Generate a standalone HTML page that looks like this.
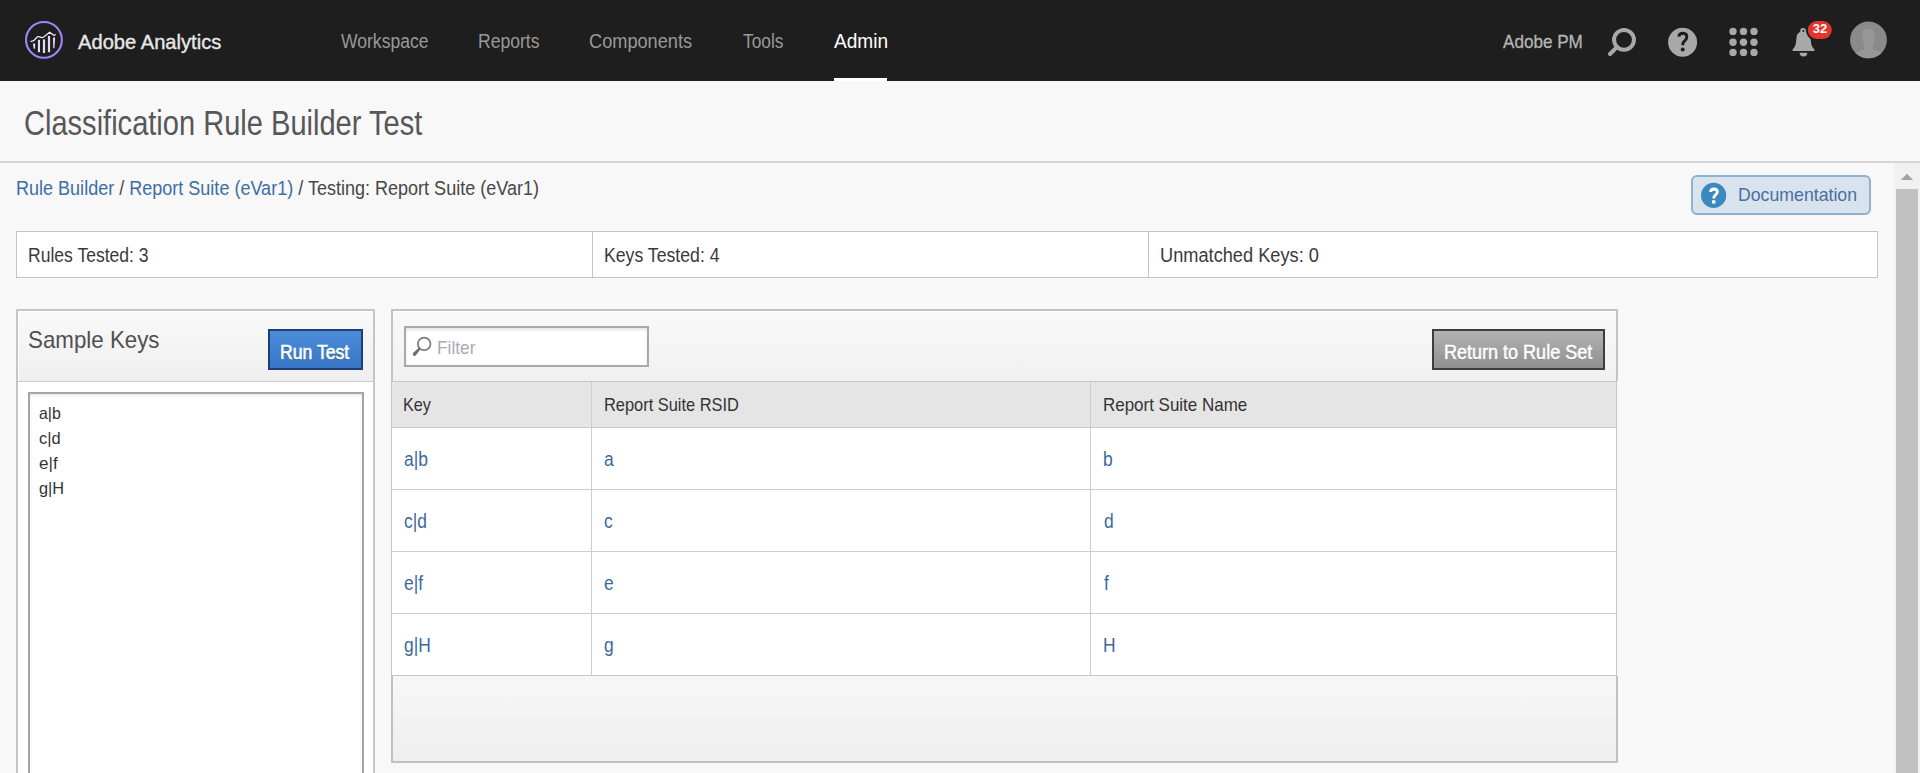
<!DOCTYPE html>
<html><head><meta charset="utf-8">
<style>
*{box-sizing:border-box;margin:0;padding:0}
html,body{width:1920px;height:773px;overflow:hidden;background:#f8f8f8;font-family:"Liberation Sans",sans-serif;position:relative}
.b{position:absolute}
.t{position:absolute;white-space:nowrap;transform-origin:0 0}
</style></head><body>
<!-- header -->
<div class="b" style="left:0;top:0;width:1920px;height:81px;background:#1e1e1e"></div>
<div class="b" style="left:834px;top:78px;width:53px;height:3px;background:#fff"></div>
<svg class="b" style="left:24px;top:20px" width="40" height="40" viewBox="0 0 40 40">
  <circle cx="19.95" cy="19.9" r="17.9" fill="none" stroke="#9c86f0" stroke-width="2.1"/>
  <path d="M6.5 21.4 Q8.5 21.6 10.5 20 Q12.5 17.2 13.9 16.6 Q15.5 16.4 17.1 17.5 Q18.5 17.8 20 16.8 L25.6 12.3 L30 15.3 Q30.8 15.4 31.8 14.4" fill="none" stroke="#ece6ff" stroke-width="1.3"/>
  <g fill="#e2dbf7">
    <path d="M8.9 23.6 L11.1 23.6 L11.1 28.8 L9.7 28.8 Z"/>
    <rect x="13.9" y="19.9" width="2.1" height="12.3"/>
    <rect x="18.9" y="19.4" width="2.2" height="13.6"/>
    <rect x="23.9" y="15.9" width="2.2" height="16.3"/>
    <path d="M29 17.6 L31.1 17.6 L30.4 28.2 L29.2 28.2 Z"/>
  </g>
</svg>
<!-- right header icons -->
<svg class="b" style="left:1600px;top:20px" width="300" height="45" viewBox="1600 20 300 45">
  <!-- search -->
  <circle cx="1624" cy="39.85" r="9.95" fill="none" stroke="#a8a8a8" stroke-width="4"/>
  <line x1="1617" y1="47" x2="1610" y2="54" stroke="#a8a8a8" stroke-width="4" stroke-linecap="round"/>
  <!-- help -->
  <circle cx="1682.6" cy="42.3" r="14.5" fill="#a8a8a8"/>
  <path d="M1678.9 36.6 Q1679.2 33.3 1682.9 33.3 Q1686.8 33.4 1686.8 37 Q1686.6 39.8 1684.3 41.2 Q1682.7 42.3 1682.7 45.3" fill="none" stroke="#1e1e1e" stroke-width="3"/>
  <circle cx="1682.7" cy="49.6" r="2" fill="#1e1e1e"/>
  <!-- grid -->
  <g fill="#a8a8a8">
    <circle cx="1733" cy="31.4" r="3.7"/><circle cx="1743.5" cy="31.4" r="3.7"/><circle cx="1754" cy="31.4" r="3.7"/>
    <circle cx="1733" cy="42.3" r="3.7"/><circle cx="1743.5" cy="42.3" r="3.7"/><circle cx="1754" cy="42.3" r="3.7"/>
    <circle cx="1733" cy="52.4" r="3.7"/><circle cx="1743.5" cy="52.4" r="3.7"/><circle cx="1754" cy="52.4" r="3.7"/>
  </g>
  <!-- bell -->
  <g fill="#a8a8a8">
    <circle cx="1803.1" cy="30.9" r="2.9"/>
    <path d="M1803.5 31.4 C1799.2 31.4 1797 33.5 1796.7 36.5 L1795.8 43.5 C1795.4 46.5 1794 48 1792.6 49.2 L1792.6 50.9 L1814.4 50.9 L1814.4 49.2 C1813 48 1811.6 46.5 1811.2 43.5 L1810.3 36.5 C1810 33.5 1807.8 31.4 1803.5 31.4 Z"/>
    <path d="M1799.7 52.8 L1807.3 52.8 Q1807.3 56.6 1803.5 56.6 Q1799.7 56.6 1799.7 52.8 Z"/>
  </g>
  <circle cx="1803.4" cy="31" r="1" fill="#1e1e1e"/>
  <rect x="1806" y="19" width="27.6" height="22" rx="11" fill="#1e1e1e"/>
  <rect x="1807.8" y="21" width="24" height="18" rx="9" fill="#e4352d"/>
  <text x="1820" y="33" text-anchor="middle" font-family="Liberation Sans" font-weight="bold" font-size="13" fill="#fff">32</text>
  <!-- avatar -->
  <defs><clipPath id="av"><circle cx="1868.5" cy="39.9" r="18.4"/></clipPath></defs>
  <circle cx="1868.5" cy="39.9" r="18.4" fill="#8a8a8a"/>
  <g clip-path="url(#av)" fill="#979797">
    <path d="M1862.3 33.5 Q1862.3 28.8 1868.4 28.8 Q1874.5 28.8 1874.5 33.5 L1874.3 39 Q1874 43 1872.8 45 L1873 49.5 Q1880 51 1884 54.5 L1884 62 L1853 62 L1853 54.5 Q1857 51 1864 49.5 L1864.2 45 Q1862.9 43 1862.6 39 Z"/>
  </g>
</svg>
<!-- rule + scrollbar -->
<div class="b" style="left:0;top:161px;width:1920px;height:2px;background:#d5d5d5"></div>
<div class="b" style="left:1894px;top:163px;width:26px;height:610px;background:#f1f1f1"></div>
<svg class="b" style="left:1894px;top:163px" width="26" height="30" viewBox="0 0 26 30"><path d="M6.8 17 L13 10.8 L19.2 17 Z" fill="#a3a3a3"/></svg>
<div class="b" style="left:1896px;top:189px;width:22px;height:584px;background:#c1c1c1"></div>
<!-- documentation button -->
<div class="b" style="left:1691px;top:175px;width:180px;height:40px;background:#d9e3ed;border:2px solid #8eb0d1;border-radius:6px"></div>
<svg class="b" style="left:1700px;top:182px" width="28" height="28" viewBox="0 0 28 28">
  <circle cx="13.6" cy="13.4" r="12.6" fill="#3a8ac0"/>
  <path d="M10.6 10 Q10.8 7 14 7 Q17.3 7.1 17.3 10 Q17.2 12 15.2 13.2 Q13.8 14 13.8 16.6" fill="none" stroke="#fff" stroke-width="2.9"/>
  <rect x="12" y="18.3" width="3.4" height="3.2" fill="#fff"/>
</svg>
<!-- stats -->
<div class="b" style="left:16px;top:231px;width:1862px;height:47px;background:#fff;border:1px solid #c4c4c4"></div>
<div class="b" style="left:592px;top:232px;width:1px;height:45px;background:#c4c4c4"></div>
<div class="b" style="left:1148px;top:232px;width:1px;height:45px;background:#c4c4c4"></div>
<!-- sample keys panel -->
<div class="b" style="left:16px;top:309px;width:359px;height:480px;background:#fff;border:2px solid #c6c6c6"></div>
<div class="b" style="left:18px;top:311px;width:355px;height:70px;background:linear-gradient(#f9f9f9,#efefef);border-top:1px solid #fff;border-left:1px solid #fff"></div>
<div class="b" style="left:18px;top:381px;width:355px;height:1px;background:#cbcbcb"></div>
<div class="b" style="left:268px;top:329px;width:95px;height:41px;background:linear-gradient(#4b8cd9,#3876c7);border:2px solid #1b3e74"></div>
<div class="b" style="left:28px;top:392px;width:336px;height:400px;background:#fff;border:2px solid #a6a6a6;box-shadow:inset 0 2px 3px rgba(0,0,0,.08)"></div>
<!-- table panel -->
<div class="b" style="left:391px;top:309px;width:1227px;height:72px;background:linear-gradient(#f9f9f9,#f0f0f0);border:2px solid #c3c3c3;border-bottom:none"></div>
<div class="b" style="left:393px;top:311px;width:1223px;height:1px;background:#fff"></div>
<div class="b" style="left:404px;top:326px;width:245px;height:41px;background:#fff;border:2px solid #a9a9a9;box-shadow:inset 0 2px 3px rgba(0,0,0,.10)"></div>
<svg class="b" style="left:410px;top:334px" width="26" height="26" viewBox="410 334 26 26">
  <circle cx="424.2" cy="343.9" r="6.3" fill="none" stroke="#7c7c7c" stroke-width="1.7"/>
  <path d="M419.2 347.6 L420.6 349 L415.8 355.4 Q414 356.4 413 355.2 Q412.4 353.8 413.6 352.6 Z" fill="#6e6e6e"/>
</svg>
<div class="b" style="left:1432px;top:329px;width:173px;height:41px;background:linear-gradient(#b3b3b3,#8f8f8f);border:2px solid #3d3d3d"></div>
<!-- table -->
<div class="b" style="left:391px;top:381px;width:1226px;height:295px;background:#fff;border-left:1px solid #c6c6c6;border-right:1px solid #c6c6c6"></div>
<div class="b" style="left:392px;top:382px;width:1224px;height:45px;background:#e5e5e5"></div>
<div class="b" style="left:391px;top:381px;width:1226px;height:1px;background:#c6c6c6"></div>
<div class="b" style="left:391px;top:427px;width:1226px;height:1px;background:#c8c8c8"></div>
<div class="b" style="left:391px;top:489px;width:1226px;height:1px;background:#cdcdcd"></div>
<div class="b" style="left:391px;top:551px;width:1226px;height:1px;background:#cdcdcd"></div>
<div class="b" style="left:391px;top:613px;width:1226px;height:1px;background:#cdcdcd"></div>
<div class="b" style="left:391px;top:675px;width:1226px;height:1px;background:#c6c6c6"></div>
<div class="b" style="left:591px;top:382px;width:1px;height:293px;background:#cdcdcd"></div>
<div class="b" style="left:1090px;top:382px;width:1px;height:293px;background:#cdcdcd"></div>
<!-- footer -->
<div class="b" style="left:391px;top:676px;width:1227px;height:87px;background:linear-gradient(#f7f7f7,#eeeeee);border:2px solid #c0c0c0;border-top:none"></div>
<div class="t" style="left:78.40px;top:31.02px;font-size:21px;line-height:21px;font-weight:normal;color:#e8e8e8;transform:scaleX(0.9588);-webkit-text-stroke:0.35px #e8e8e8;">Adobe Analytics</div>
<div class="t" style="left:341.40px;top:30.87px;font-size:20px;line-height:20px;font-weight:normal;color:#999999;transform:scaleX(0.8780);">Workspace</div>
<div class="t" style="left:478.12px;top:30.87px;font-size:20px;line-height:20px;font-weight:normal;color:#999999;transform:scaleX(0.8779);">Reports</div>
<div class="t" style="left:589.39px;top:30.87px;font-size:20px;line-height:20px;font-weight:normal;color:#999999;transform:scaleX(0.9093);">Components</div>
<div class="t" style="left:742.50px;top:30.87px;font-size:20px;line-height:20px;font-weight:normal;color:#999999;transform:scaleX(0.8674);">Tools</div>
<div class="t" style="left:833.50px;top:30.87px;font-size:20px;line-height:20px;font-weight:normal;color:#ffffff;transform:scaleX(0.9538);">Admin</div>
<div class="t" style="left:1503.20px;top:31.72px;font-size:19px;line-height:19px;font-weight:normal;color:#b5b5b5;transform:scaleX(0.9000);-webkit-text-stroke:0.3px #b5b5b5;">Adobe PM</div>
<div class="t" style="left:23.97px;top:104.97px;font-size:35px;line-height:35px;font-weight:normal;color:#575757;transform:scaleX(0.8300);">Classification Rule Builder Test</div>
<div class="t" style="left:16.32px;top:179.16px;font-size:19.3px;line-height:19.3px;font-weight:normal;color:#474747;transform:scaleX(0.9348);"><span style="color:#3b6ea5">Rule Builder</span> / <span style="color:#3b6ea5">Report Suite (eVar1)</span> / Testing: Report Suite (eVar1)</div>
<div class="t" style="left:1737.80px;top:186.72px;font-size:17.7px;line-height:17.7px;font-weight:normal;color:#4a6e9e;transform:scaleX(1.0006);">Documentation</div>
<div class="t" style="left:27.87px;top:244.77px;font-size:20px;line-height:20px;font-weight:normal;color:#3a3a3a;transform:scaleX(0.8773);">Rules Tested: 3</div>
<div class="t" style="left:603.87px;top:244.77px;font-size:20px;line-height:20px;font-weight:normal;color:#3a3a3a;transform:scaleX(0.8831);">Keys Tested: 4</div>
<div class="t" style="left:1159.89px;top:244.77px;font-size:20px;line-height:20px;font-weight:normal;color:#3a3a3a;transform:scaleX(0.9106);">Unmatched Keys: 0</div>
<div class="t" style="left:27.81px;top:327.55px;font-size:23.8px;line-height:23.8px;font-weight:normal;color:#505050;transform:scaleX(0.9379);">Sample Keys</div>
<div class="t" style="left:280.12px;top:342.27px;font-size:20px;line-height:20px;font-weight:normal;color:#ffffff;transform:scaleX(0.8804);-webkit-text-stroke:0.6px #fff;text-shadow:0 1px 0 rgba(40,80,20,.75);">Run Test</div>
<div class="t" style="left:38.90px;top:405.03px;font-size:16.5px;line-height:16.5px;font-weight:normal;color:#333333;transform:scaleX(0.9660);">a|b</div>
<div class="t" style="left:38.90px;top:430.03px;font-size:16.5px;line-height:16.5px;font-weight:normal;color:#333333;transform:scaleX(0.9937);">c|d</div>
<div class="t" style="left:38.90px;top:455.03px;font-size:16.5px;line-height:16.5px;font-weight:normal;color:#333333;transform:scaleX(1.0345);">e|f</div>
<div class="t" style="left:38.90px;top:480.03px;font-size:16.5px;line-height:16.5px;font-weight:normal;color:#333333;transform:scaleX(0.9893);">g|H</div>
<div class="t" style="left:436.95px;top:338.79px;font-size:18.2px;line-height:18.2px;font-weight:normal;color:#a9a9b5;transform:scaleX(0.9502);">Filter</div>
<div class="t" style="left:1444.40px;top:341.87px;font-size:20px;line-height:20px;font-weight:normal;color:#ffffff;transform:scaleX(0.9007);-webkit-text-stroke:0.5px #fff;text-shadow:0 1px 0 rgba(0,0,0,.25);">Return to Rule Set</div>
<div class="t" style="left:403.35px;top:395.42px;font-size:19px;line-height:19px;font-weight:normal;color:#333333;transform:scaleX(0.8530);">Key</div>
<div class="t" style="left:603.74px;top:395.12px;font-size:19px;line-height:19px;font-weight:normal;color:#333333;transform:scaleX(0.8631);">Report Suite RSID</div>
<div class="t" style="left:1102.51px;top:394.72px;font-size:19px;line-height:19px;font-weight:normal;color:#333333;transform:scaleX(0.8925);">Report Suite Name</div>
<div class="t" style="left:404.20px;top:448.65px;font-size:20.5px;line-height:20.5px;font-weight:normal;color:#3b6a9b;transform:scaleX(0.8500);">a|b</div>
<div class="t" style="left:604.00px;top:448.65px;font-size:20.5px;line-height:20.5px;font-weight:normal;color:#3b6a9b;transform:scaleX(0.8500);">a</div>
<div class="t" style="left:1103.05px;top:448.65px;font-size:20.5px;line-height:20.5px;font-weight:normal;color:#3b6a9b;transform:scaleX(0.8500);">b</div>
<div class="t" style="left:404.20px;top:510.65px;font-size:20.5px;line-height:20.5px;font-weight:normal;color:#3b6a9b;transform:scaleX(0.8500);">c|d</div>
<div class="t" style="left:604.00px;top:510.65px;font-size:20.5px;line-height:20.5px;font-weight:normal;color:#3b6a9b;transform:scaleX(0.8500);">c</div>
<div class="t" style="left:1103.90px;top:510.65px;font-size:20.5px;line-height:20.5px;font-weight:normal;color:#3b6a9b;transform:scaleX(0.8500);">d</div>
<div class="t" style="left:404.20px;top:572.65px;font-size:20.5px;line-height:20.5px;font-weight:normal;color:#3b6a9b;transform:scaleX(0.8500);">e|f</div>
<div class="t" style="left:604.00px;top:572.65px;font-size:20.5px;line-height:20.5px;font-weight:normal;color:#3b6a9b;transform:scaleX(0.8500);">e</div>
<div class="t" style="left:1103.90px;top:572.65px;font-size:20.5px;line-height:20.5px;font-weight:normal;color:#3b6a9b;transform:scaleX(0.8500);">f</div>
<div class="t" style="left:404.20px;top:634.65px;font-size:20.5px;line-height:20.5px;font-weight:normal;color:#3b6a9b;transform:scaleX(0.8500);">g|H</div>
<div class="t" style="left:604.00px;top:634.65px;font-size:20.5px;line-height:20.5px;font-weight:normal;color:#3b6a9b;transform:scaleX(0.8500);">g</div>
<div class="t" style="left:1103.05px;top:634.65px;font-size:20.5px;line-height:20.5px;font-weight:normal;color:#3b6a9b;transform:scaleX(0.8500);">H</div>
</body></html>
